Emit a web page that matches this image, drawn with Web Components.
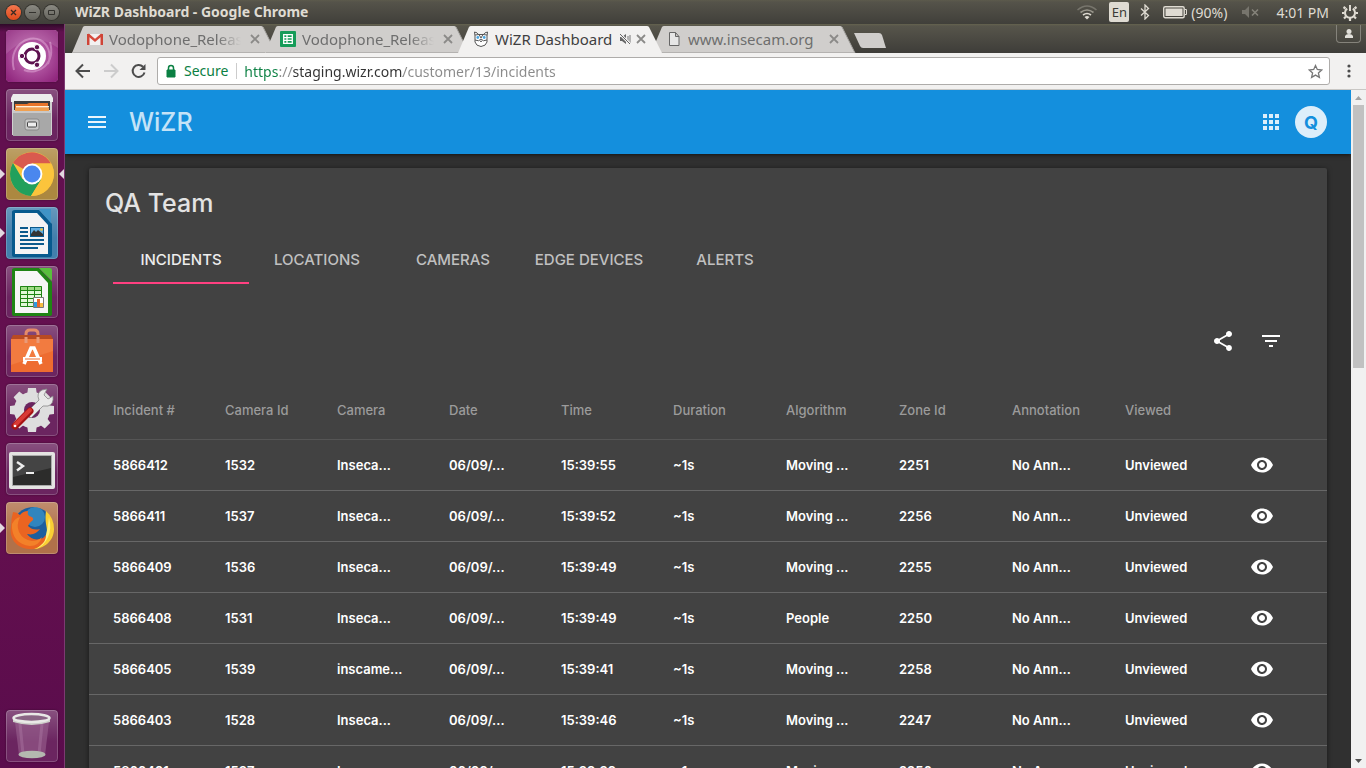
<!DOCTYPE html>
<html lang="en">
<head>
<meta charset="utf-8">
<title>WiZR Dashboard</title>
<style>
html, body { margin: 0; height: 100%; overflow: hidden; background: #303030; }
body { font-family: "Noto Sans", "Open Sans", sans-serif; }
</style>
</head>
<body>
<desktop-shell>
  <menu-bar slot="bar" heading="WiZR Dashboard - Google Chrome"></menu-bar>
  <app-launcher slot="launcher">
    <launcher-item name="Search" icon="dash" tint="#9a3a86"></launcher-item>
    <launcher-item name="Files" icon="files" tint="#6b2560"></launcher-item>
    <launcher-item name="Chrome" icon="chrome" tint="#ac8840" running active></launcher-item>
    <launcher-item name="Writer" icon="writer" tint="#427fac" running></launcher-item>
    <launcher-item name="Calc" icon="calc" tint="#6b2560"></launcher-item>
    <launcher-item name="Software" icon="software" tint="#6b2560"></launcher-item>
    <launcher-item name="Settings" icon="settings" tint="#6b2560"></launcher-item>
    <launcher-item name="Terminal" icon="terminal" tint="#6b2560"></launcher-item>
    <launcher-item name="Firefox" icon="firefox" tint="#b0714a" running></launcher-item>
    <launcher-item slot="end" name="Trash" icon="trash" tint="#6b2560"></launcher-item>
  </app-launcher>
  <browser-window>
    <browser-tab slot="tab" icon="gmail" fade>Vodophone_Release</browser-tab>
    <browser-tab slot="tab" icon="sheets" fade>Vodophone_Release</browser-tab>
    <browser-tab slot="tab" icon="owl" active muted>WiZR Dashboard</browser-tab>
    <browser-tab slot="tab" icon="page">www.insecam.org</browser-tab>
    <browser-toolbar slot="toolbar" url="https://staging.wizr.com/customer/13/incidents"></browser-toolbar>
    <wizr-app>
      <wizr-header slot="header" initial="Q">WiZR</wizr-header>
      <team-card>
        <span slot="title">QA Team</span>
        <section-tabs slot="tabs" items="Incidents,Locations,Cameras,Edge Devices,Alerts"></section-tabs>
        <incident-table></incident-table>
      </team-card>
    </wizr-app>
    <page-scrollbar slot="scroll"></page-scrollbar>
  </browser-window>
</desktop-shell>

<script>
const define = (name, render) => customElements.define(name, class extends HTMLElement {
  connectedCallback() {
    if (this.shadowRoot) return;
    this.attachShadow({ mode: "open" }).innerHTML = render(this);
  }
});
const reset = `:host,*{box-sizing:border-box} button{margin:0;padding:0;border:0;background:none;color:inherit;font:inherit;display:flex;align-items:center;justify-content:center;flex:none} svg{display:block;flex:none} a{color:inherit;text-decoration:none}`;

/* Launcher artwork, drawn on a 52 x 52 tile */
const launcherIcons = {
  dash: `<defs><radialGradient id="g" cx=".5" cy=".5" r=".7"><stop offset="0" stop-color="#c877ba"/><stop offset="1" stop-color="#8b1f78"/></radialGradient></defs>
    <rect width="52" height="52" rx="4" fill="url(#g)"/><path d="M8 40C2 16 22 4 34 10c8 4 12 14 8 24M44 12c6 22-12 34-26 28" fill="none" stroke="#e0a8d6" stroke-width="2" opacity=".55"/>
    <path d="M0 0h52v18C36 6 18 6 0 24z" fill="#fff" opacity=".12"/>
    <circle cx="26" cy="26" r="14" fill="#fff"/><circle cx="26" cy="26" r="7" fill="none" stroke="#5e1250" stroke-width="3"/>
    <g fill="#5e1250" stroke="#fff" stroke-width="1"><circle cx="16" cy="26" r="2.700"/><circle cx="31" cy="17.200" r="2.700"/><circle cx="31" cy="34.800" r="2.700"/></g>`,
  files: `<path d="M6 9l2-4h36l2 4v37H6z" fill="#d0d0d0"/><path d="M5 9l2-4h38l2 4v4H5z" fill="#ececec"/><path d="M8 12h36v9H8z" fill="#3c3c3c"/>
    <path d="M9 15h12l2-1h19v7H9z" fill="#e8742a"/><path d="M10 17h33v1.500H10z" fill="#fff2d8"/><path d="M9 19h34v3H9z" fill="#f0a050"/>
    <path d="M7 22h38v25H7z" fill="#a8a8a8"/><path d="M7 22h38v2H7z" fill="#c8c8c8"/><rect x="19" y="30" width="14" height="11" rx="2" fill="#c9c9c9" stroke="#888"/><rect x="21.500" y="33" width="9" height="5" rx="1" fill="#eee" stroke="#444"/>`,
  chrome: `<circle cx="26" cy="26" r="22" fill="#fbc43c"/><path d="M26 26L7 15A22 22 0 0 1 45 15.500H26z" fill="#d95a4e"/>
    <path d="M7 15A22 22 0 0 0 25 48l10.500-17H16.500z" fill="#21a05c"/><path d="M45 15.500H26V26l9 6L25 48A22 22 0 0 0 45 15.500z" fill="#fbc43c"/>
    <circle cx="26" cy="26" r="10.400" fill="#fff"/><circle cx="26" cy="26" r="8.500" fill="#4a87ee"/>`,
  writer: `<path d="M9 3h24l13 14v31q0 2-2 2H8q-2 0-2-2V5q0-2 3-2z" fill="#075a8d"/><path d="M33 2h12v14z" fill="#3f94c6"/><path d="M9 6h22l11 12v29H9z" fill="#f4f4f4"/>
    <g fill="#0b5a8c"><path d="M14 20h8v2h-8zM14 24h8v2h-8zM14 28h8v2h-8zM14 32h24v2H14zM14 36h24v2H14zM14 40h18v2H14z"/><path d="M24 20h14v10H24z"/></g><path d="M25 21h12v8H25z" fill="#62aee0"/><path d="M25 29v-2l3-4 2 2 2-2 5 4v2z" fill="#333"/><circle cx="35.500" cy="22.500" r="1.300" fill="#f6c434"/>`,
  calc: `<path d="M9 2h24l13 14v32q0 2-2 2H8q-2 0-2-2V4q0-2 3-2z" fill="#1f8414"/><path d="M33 2h11q2 0 2 2v11z" fill="#58bf3c"/><path d="M9 5h22l11 12v30H9z" fill="#f6f6f6"/>
    <path d="M14 20h22v21H14z" fill="#e2f8d8"/><path d="M14 20h22v4H14z" fill="#9fdb84"/><path d="M14.500 20.500h21v20h-21zM21.500 20v20M28.500 20v20M14 24.500h22M14 28.500h22M14 32.500h22M14 36.500h22" fill="none" stroke="#1f8414"/>
    <path d="M27.500 31.500h10v10h-10z" fill="#fff" stroke="#777"/><path d="M28 36h3v5h-3z" fill="#2e9be0"/><path d="M31 33h3v8h-3z" fill="#e8672a"/><path d="M34 37h3v4h-3z" fill="#f5bd42"/>`,
  software: `<path d="M20 18V9q0-4 4-4h4q4 0 4 4v9" fill="none" stroke="#e58a68" stroke-width="3"/><path d="M7 10h38l2 4H5z" fill="#b84a22"/><path d="M5 14h42v33H5z" fill="#ee6c30"/><path d="M5 14h42v12L5 40z" fill="#f58a50" opacity=".5"/>
    <path d="M20 18V12M32 18V12" stroke="#e99a78" stroke-width="3"/><path d="M18 39l7-16h3l7 16" fill="none" stroke="#fff" stroke-width="3.500"/><path d="M17 34h19" stroke="#fff" stroke-width="4"/><path d="M19 34h15" stroke="#ee6c30" stroke-width="1"/>`,
  settings: `<g fill="#dedede"><circle cx="26" cy="26" r="18"/><path d="M22 4h8l1 8h-10zM22 48h8l1-8h-10zM4 22v8l8 1v-10zM48 22v8l-8 1v-10z"/><path transform="rotate(45 26 26)" d="M22 4h8l1 8h-10zM22 48h8l1-8h-10zM4 22v8l8 1v-10zM48 22v8l-8 1v-10z"/></g><circle cx="26" cy="26" r="8" fill="#6b2560"/>
    <path d="M20 29L33 16q-3-7 3-10l5-1-3 6 4 4 5-3q1 8-5 10l-5 0-12 12z" fill="#e8e8e8" stroke="#888" stroke-width=".8"/><path d="M9 42L24 27" stroke="#a61313" stroke-width="7" stroke-linecap="round"/><path d="M9 41L24 26" stroke="#d83a35" stroke-width="4" stroke-linecap="round"/><circle cx="9" cy="42" r="1.300" fill="#fff"/>`,
  terminal: `<rect x="3" y="9" width="46" height="37" rx="2" fill="#e4e4e2"/><rect x="6" y="12" width="40" height="31" fill="#aaa"/><path d="M7 13h38v29H7z" fill="#2c2c2b"/><path d="M7 13h38v12L7 34z" fill="#555" opacity=".6"/><path d="M11 19l6 4-6 4.500" fill="none" stroke="#eee" stroke-width="2.400"/><path d="M20 30h8" stroke="#eee" stroke-width="2"/>`,
  firefox: `<circle cx="27" cy="25" r="20" fill="#1c5f9e"/><circle cx="29" cy="15" r="10" fill="#3f9fd4" opacity=".6"/><path d="M40 9q8 7 8 18c0 12-10 20-21 20q10-4 13-13c3-8-2-11 0-25z" fill="#f9cf34"/><path d="M43 15q3 12-1 20-4 9-12 12 8-6 10-14 2-8 3-18z" fill="#fff07a"/>
    <path d="M7 10q4 0 7 3 3-4 8-4-1 3 1 5 5 1 4 4-4 3-5 6 5 5 12 3-5 7-13 5 5 7 13 5 4-1 6-4 0 6-5 10-5 5-12 4C9 46 3 35 5 25q0-8 2-15z" fill="#ea6421"/><path d="M6 22q3-6 8-7-4 8-1 15 4 8 13 9 6 0 10-4-3 9-12 9C12 43 5 34 6 22z" fill="#f58b2c" opacity=".75"/>`,
  trash: `<path d="M9 12h34l-4 33q-12 5-26 0z" fill="#9a6290" opacity=".6"/><path d="M14 14l3 30M36 14l-3 30" stroke="#c79cc0" opacity=".25" stroke-width="3"/><ellipse cx="26" cy="44.500" rx="13.500" ry="3.800" fill="#b4b8b0"/><path d="M7 8v4q19 6 37 0V8z" fill="#cdcdc9"/><ellipse cx="25.500" cy="8" rx="18" ry="4" fill="#8a6584" stroke="#e9e9e6" stroke-width="2.500"/>`
};

/* Favicons, drawn on a 16 x 16 grid */
const favicons = {
  gmail: `<path d="M0 3h16v11H0z" fill="#f3f1f0"/><path d="M1 3.500l7 6 7-6" fill="none" stroke="#d54a3c" stroke-width="2.400"/><path d="M0 3h2.500v11H0zM13.500 3H16v11h-2.500z" fill="#cf4436"/>`,
  sheets: `<rect width="16" height="16" rx="1" fill="#169c59"/><path d="M3.700 3.700h8.600v8.600H3.700zM3.700 6.600h8.600M3.700 9.400h8.600M7 3.700v8.600" fill="none" stroke="#fff" stroke-width="1.300"/>`,
  owl: `<path d="M1.500 1q3 .5 4 2.500h5q1-2 4-2.500l-.5 4v6q-1 4-6 4.500-5-.5-6-4.500V5z" fill="#fff" stroke="#555" stroke-width="1"/><path d="M2 4l4-.5L8 7l2-3.500 4 .5M2 9q4 2 6-1 2 3 6 1M7 9.500l1 1.500 1-1.500" fill="none" stroke="#555"/><circle cx="4.800" cy="6.500" r="1.400" fill="#4aa5e0"/><circle cx="11.200" cy="6.500" r="1.400" fill="#4aa5e0"/>`,
  page: `<path d="M3.500 1.500h6l3.500 4v9h-9.500zM9.500 1.500v4H13" fill="#e6e6e6" stroke="#666"/>`
};

define("desktop-shell", () => `<style>${reset}
  :host{display:grid;grid-template:24px minmax(0,1fr) / 65px minmax(0,1fr);height:100vh;overflow:hidden}
  .bar{grid-column:1 / -1;display:grid}.launcher,.main{display:grid;min-height:0;min-width:0}
  </style><div class="bar"><slot name="bar"></slot></div><div class="launcher"><slot name="launcher"></slot></div><div class="main"><slot></slot></div>`);

define("menu-bar", el => `<style>${reset}
  :host{display:flex;align-items:center;justify-content:space-between;height:24px;padding:0 8px 0 6px;background:linear-gradient(#5c5a4c,#55534a 2px,#403f3a);color:#dfdbd2;font-size:14px}
  .left,.right,.buttons{display:flex;align-items:center}.buttons{gap:4px;margin-right:16px}
  .buttons button{width:15px;height:15px;border-radius:50%;background:linear-gradient(#8a8982,#64635c);box-shadow:0 0 0 1px #35342f}
  .buttons .close{background:linear-gradient(#f4774e,#df4a1b)}
  h1{margin:0;font-size:14px;line-height:24px;font-weight:700;white-space:nowrap}
  .lang{background:#dfdbd2;color:#3c3b37;width:20px;height:20px;border-radius:2px;line-height:20px;text-align:center;margin:0 11px 0 12px;font-size:13px}
  .battery{margin-left:13px}.level{margin:0 14px 0 4px}.clock{margin:0 13px 0 16px}
  </style><div class="left"><div class="buttons">
  <button class="close" aria-label="Close"><svg width="9" height="9"><path d="M2 2l5 5M7 2L2 7" stroke="#3b2a22" stroke-width="1.300"/></svg></button>
  <button aria-label="Minimise"><svg width="9" height="9"><path d="M1 4.500h7" stroke="#33322e"/></svg></button>
  <button aria-label="Maximise"><svg width="9" height="9"><path d="M1.500 2.500h6v4h-6z" fill="none" stroke="#33322e"/></svg></button></div>
  <h1>${el.getAttribute("heading")}</h1></div>
  <div class="right">
  <svg width="20" height="16" fill="none" stroke-width="1.600"><path d="M.5 6q9.500-8 19 0" stroke="#77756c"/><path d="M3.500 8.500q6.500-5 13 0" stroke="#99968c"/><path d="M6 11q4-3 8 0" stroke="#dfdbd2"/><path d="M7.500 13q2.500-2 5 0L10 15.500z" fill="#dfdbd2"/></svg>
  <span class="lang">En</span>
  <svg width="10" height="16" fill="none" stroke="#dfdbd2" stroke-width="1.300"><path d="M1 4.500l7.500 7L5 15V1l3.500 3.500-7.500 7"/></svg>
  <svg class="battery" width="24" height="14"><rect x=".7" y="1.700" width="20.500" height="11" rx="1.500" fill="none" stroke="#dfdbd2" stroke-width="1.400"/><path d="M2.500 3.500h17v7.500h-17z" fill="#dfdbd2"/><path d="M22 4.500h1.500v5H22" fill="none" stroke="#dfdbd2"/></svg>
  <span class="level">(90%)</span>
  <svg width="19" height="14"><path d="M1 5h3l4-4v12L4 9H1z" fill="#77756d"/><path d="M11 4.500l6 6M17 4.500l-6 6" stroke="#85837a" stroke-width="1.600"/></svg>
  <span class="clock">4:01 PM</span>
  <svg width="16" height="17" fill="none" stroke="#dfdbd2"><path d="M5.200 4.600a5 5 0 1 0 5.600 0" stroke-width="2"/><path d="M8 1v6" stroke-width="2"/><path d="M3.500 4.500l-2-1.500M12.500 4.500l2-1.500M2.500 9H0M13.500 9H16M4 12.500l-2 2M12 12.500l2 2M8 14v3" stroke-width="2.200"/></svg></div>`);

define("app-launcher", () => `<style>${reset}
  :host{display:flex;flex-direction:column;justify-content:space-between;min-height:0;padding:6px 0;background:linear-gradient(#2e0a28,#61104f 8px,#65104f 60%,#5a0c4c);border-right:1px solid #7d3a72}
  nav{display:flex;flex-direction:column;gap:7px}</style>
  <nav><slot></slot></nav><nav><slot name="end"></slot></nav>`);

define("launcher-item", el => `<style>${reset}
  :host{display:flex;align-items:center;justify-content:space-between;height:52px}
  i{width:0;height:0;border:5px solid transparent;margin:0}.l{border-width:5px 0 5px 5px;margin-right:1px}.r{border-width:5px 5px 5px 0;margin-left:1px}
  .l.on{border-left-color:#e2d8e0}.r.on{border-right-color:#e2d8e0}
  button{width:52px;height:52px;border-radius:4px;overflow:hidden;background:linear-gradient(#fff3,#fff0 60%) ${el.getAttribute("tint")};box-shadow:inset 0 0 0 1px #ffffff33,0 0 2px #0006}
  </style><i class="l ${el.hasAttribute("running") ? "on" : ""}"></i><button aria-label="${el.getAttribute("name")}"><svg width="52" height="52">${launcherIcons[el.getAttribute("icon")]}</svg></button><i class="r ${el.hasAttribute("active") ? "on" : ""}"></i>`);

define("browser-window", () => `<style>${reset}
  :host{display:grid;grid-template-rows:29px 37px minmax(0,1fr);min-width:0;min-height:0}
  .strip{display:flex;align-items:flex-end;padding:0 5px 0 7px;background:linear-gradient(#65634f,#57554b 2px,#3e3d39)}
  .new{align-self:center;margin:3px 0 0 9px}
  .user{margin-left:auto;align-self:flex-start;width:25px;height:18px;border:1px solid #85837b;border-top:0;border-radius:0 0 4px 4px;margin-top:1px}
  .view{display:grid;grid-template-columns:minmax(0,1fr) 15px;min-height:0;overflow:hidden}
  </style><div class="strip"><slot name="tab"></slot>
  <button class="new" aria-label="New tab"><svg width="34" height="15"><path d="M1 0h25q2 0 3 2l4 13H10q-2 0-3-2z" fill="#cfcdcb"/></svg></button>
  <button class="user" aria-label="Profile"><svg width="10" height="11"><circle cx="5" cy="3.500" r="2.500" fill="#e2e0da"/><path d="M1 10V8q1-2 4-2t4 2v2z" fill="#e2e0da"/></svg></button></div>
  <slot name="toolbar"></slot><div class="view"><slot></slot><slot name="scroll"></slot></div>`);

define("browser-tab", el => {
  const on = el.hasAttribute("active");
  return `<style>${reset}
  :host{display:flex;align-items:center;position:relative;z-index:${on ? 2 : 1};flex:none;width:205px;height:28px;margin-right:-12px;padding:0 14px 0 15px;color:${on ? "#3f3f3f" : "#6e6e6e"};font-size:15px}
  .shape{position:absolute;inset:0;z-index:-1}.fav{margin-right:6px}
  .label{flex:1;min-width:0;overflow:hidden;white-space:nowrap;line-height:26px}
  :host([fade]) .label{-webkit-mask-image:linear-gradient(90deg,#000 calc(100% - 24px),transparent)}
  button{width:16px;height:16px;margin-left:6px}.mute{margin-left:0;width:12px}.mute + button{margin-left:2px}
  </style><svg class="shape" width="205" height="28"><path d="M0 28L11 2q.7-1 2-1h176q1.300 0 2 1l13 26z" fill="${on ? "#f2f1f0" : "#d0cecc"}"/>${on ? "" : `<path d="M1 27.500h203" stroke="#b4b2b0"/><path d="M191 2l13 26" stroke="#a3a19e" fill="none"/>`}</svg>
  <svg class="fav" width="16" height="16">${favicons[el.getAttribute("icon")]}</svg><span class="label"><slot></slot></span>
  ${el.hasAttribute("muted") ? `<button class="mute" aria-label="Unmute tab"><svg width="12" height="12"><path d="M1 4h2l4-3v10L3 8H1z" fill="#666"/><path d="M9 3v6M11 2v8" stroke="#777"/><path d="M1 1l10 10" stroke="#f2f1f0" stroke-width="2.500"/><path d="M1 1l10 10" stroke="#666"/></svg></button>` : ""}
  <button aria-label="Close tab"><svg width="10" height="10"><path d="M1 1l8 8M9 1L1 9" stroke="#8b8a88" stroke-width="1.800"/></svg></button>`;
});

define("browser-toolbar", el => `<style>${reset}
  :host{display:flex;align-items:center;padding:0 11px 0 10px;height:37px;background:#f2f1f0;border-bottom:1px solid #c9c7c4;color:#4c4c4c}
  .nav{width:16px;height:28px;margin-right:12px}.reload{margin-right:10px}
  .box{flex:1;display:flex;align-items:center;height:28px;padding:0 6px 0 8px;background:#fff;border:1px solid #aeacaa;border-radius:3px;font-size:14px}
  .secure{margin:0 8px 0 8px;color:#0b8043;line-height:20px}
  .rule{width:1px;height:16px;background:#ccc;margin-right:7px}
  input{flex:1;min-width:0;height:24px;border:0;padding:0;outline:0;font:inherit;
    background:linear-gradient(90deg,#0b8043 34px,#8a8a8a 34px 48px,#333 48px 159px,#8a8a8a 159px);-webkit-background-clip:text;background-clip:text;-webkit-text-fill-color:transparent}
  .menu{width:12px;margin-left:13px}
  label{display:flex;flex:1;align-items:center}
  </style>
  <button class="nav" aria-label="Back"><svg width="16" height="16" fill="none" stroke="#4c4c4c" stroke-width="2"><path d="M15 8H2M8 1.500L1.500 8 8 14.500"/></svg></button>
  <button class="nav" aria-label="Forward"><svg width="16" height="16" fill="none" stroke="#ccc" stroke-width="2"><path d="M1 8h13M8 1.500L14.500 8 8 14.500"/></svg></button>
  <button class="nav reload" aria-label="Reload"><svg width="16" height="16"><path d="M13.500 9.500A6 6 0 1 1 12 3.700" fill="none" stroke="#4c4c4c" stroke-width="2"/><path d="M14.500 1v6h-6z" fill="#4c4c4c"/></svg></button>
  <div class="box"><label><svg width="10" height="14"><path d="M1 6h8v7H1z" fill="#0b8043" stroke="#0b8043"/><path d="M2.500 6V4a2.500 2.500 0 0 1 5 0v2" fill="none" stroke="#0b8043" stroke-width="1.500"/></svg>
  <span class="secure">Secure</span><span class="rule"></span><input value="${el.getAttribute("url")}" aria-label="Address"></label>
  <button aria-label="Bookmark"><svg width="15" height="15"><path d="M7.500 1.500l1.800 4 4.400.5-3.300 3 1 4.400-3.900-2.300-3.900 2.300 1-4.400-3.300-3 4.400-.5z" fill="none" stroke="#777" stroke-width="1.300"/></svg></button></div>
  <button class="menu" aria-label="Menu"><svg width="4" height="14" fill="#4c4c4c"><circle cx="2" cy="2" r="1.600"/><circle cx="2" cy="7" r="1.600"/><circle cx="2" cy="12" r="1.600"/></svg></button>`);

define("page-scrollbar", () => `<style>${reset}
  :host{display:grid;grid-template-rows:15px minmax(0,1fr) 15px;background:#f1f1f1}
  .thumb{width:11px;height:40.6%;margin:0 auto;background:#c1c1c1}
  </style><button aria-label="Scroll up"><svg width="7" height="4"><path d="M0 4l3.500-4L7 4z" fill="#a3a3a3"/></svg></button><div><div class="thumb"></div></div><button aria-label="Scroll down"><svg width="7" height="4"><path d="M0 0l3.500 4L7 0z" fill="#505050"/></svg></button>`);

define("wizr-app", () => `<style>${reset}
  :host{display:flex;flex-direction:column;min-height:0;overflow:hidden;background:#303030;color:#fff;font-family:Inter,"Liberation Sans",sans-serif}
  main{padding:14px 24px 0}</style><slot name="header"></slot><main><slot></slot></main>`);

define("wizr-header", el => `<style>${reset}
  :host{display:flex;align-items:center;flex:none;height:64px;padding:0 24px 0 20px;background:#148fdd;color:#d6ebf9;box-shadow:0 1px 4px #0009}
  button{width:24px;height:24px}h2{margin:0 auto 0 20px;font-size:25px;line-height:32px;font-weight:500;color:#c4e3f7}
  .avatar{width:32px;height:32px;margin-left:12px;border-radius:50%;background:#dceefa;color:#148fdd;font-size:18px;font-weight:700}
  </style><button aria-label="Menu"><svg width="24" height="24"><path d="M3 18h18v-2H3zm0-5h18v-2H3zm0-7v2h18V6z" fill="#eaf5fc"/></svg></button>
  <h2><slot></slot></h2>
  <button aria-label="Apps"><svg width="24" height="24"><path d="M4 8h4V4H4zm6 12h4v-4h-4zm-6 0h4v-4H4zm0-6h4v-4H4zm6 0h4v-4h-4zm6-10v4h4V4zm-6 4h4V4h-4zm6 6h4v-4h-4zm0 6h4v-4h-4z" fill="#dceefa"/></svg></button>
  <button class="avatar">${el.getAttribute("initial")}</button>`);

define("team-card", () => `<style>${reset}
  :host{display:block;background:#424242;border-radius:2px;box-shadow:0 1px 5px #0008}
  h3{margin:0;padding:2px 16px 0;font-size:25px;line-height:66px;font-weight:500;color:#e3e3e3}
  .actions{display:flex;justify-content:flex-end;height:50px;margin:32px 0 14px;padding-right:32px}
  .actions button{width:48px;height:50px}
  </style><h3><slot name="title"></slot></h3><slot name="tabs"></slot>
  <div class="actions"><button aria-label="Share"><svg width="24" height="24" fill="#fff"><path d="M18 16.080c-.76 0-1.440.3-1.960.77L8.910 12.700c.05-.23.09-.46.09-.7s-.04-.47-.09-.7l7.050-4.110c.54.5 1.250.81 2.040.81 1.660 0 3-1.340 3-3s-1.340-3-3-3-3 1.340-3 3c0 .24.04.47.09.7L8.040 9.810C7.500 9.310 6.790 9 6 9c-1.660 0-3 1.340-3 3s1.340 3 3 3c.79 0 1.500-.31 2.040-.81l7.120 4.160c-.05.21-.08.43-.08.65 0 1.610 1.310 2.920 2.920 2.920s2.920-1.310 2.920-2.920-1.310-2.920-2.920-2.920z"/></svg></button>
  <button aria-label="Filter"><svg width="24" height="24" fill="#fff"><path d="M10 18h4v-2h-4zM3 6v2h18V6zm3 7h12v-2H6z"/></svg></button></div><slot></slot>`);

define("section-tabs", el => `<style>${reset}
  :host{display:block;padding:0 24px}nav{display:flex}
  a{width:136px;height:48px;line-height:48px;text-align:center;font-size:15px;font-weight:500;text-transform:uppercase;color:#c0c0c0;white-space:nowrap}
  a[aria-current]{color:#ededed;box-shadow:inset 0 -2px #ff4081}
  </style><nav>${el.getAttribute("items").split(",").map((t, i) => `<a href="#${t.toLowerCase().replace(" ", "-")}"${i ? "" : ' aria-current="page"'}>${t}</a>`).join("")}</nav>`);

const columns = ["Incident #", "Camera Id", "Camera", "Date", "Time", "Duration", "Algorithm", "Zone Id", "Annotation", "Viewed", ""];
const incidents = [
  ["5866412", "1532", "Inseca...", "15:39:55", "Moving ...", "2251"],
  ["5866411", "1537", "Inseca...", "15:39:52", "Moving ...", "2256"],
  ["5866409", "1536", "Inseca...", "15:39:49", "Moving ...", "2255"],
  ["5866408", "1531", "Inseca...", "15:39:49", "People", "2250"],
  ["5866405", "1539", "inscame...", "15:39:41", "Moving ...", "2258"],
  ["5866403", "1528", "Inseca...", "15:39:46", "Moving ...", "2247"],
  ["5866401", "1537", "Inseca...", "15:39:39", "Moving ...", "2256"]
];
define("incident-table", () => `<style>${reset}
  :host{display:block}
  table{width:100%;table-layout:fixed;border-collapse:separate;border-spacing:0}
  .lead{width:112px}
  th,td{padding:0 0 0 24px;text-align:left;white-space:nowrap;border-bottom:1px solid #676767}
  th{height:60px;font-size:13px;font-weight:500;color:#9b9b9b;border-color:#555}
  td{height:51px;font-size:13px;font-weight:600;color:#fff}
  button{width:48px;height:48px}
  </style><table><colgroup><col class="lead" span="5"><col span="6"></colgroup><thead><tr>${columns.map(c => `<th scope="col">${c}</th>`).join("")}</tr></thead><tbody>${incidents.map(([id, cam, name, time, algo, zone]) =>
    `<tr>${[id, cam, name, "06/09/...", time, "~1s", algo, zone, "No Ann...", "Unviewed"].map(v => `<td>${v}</td>`).join("")}<td><button aria-label="View incident ${id}"><svg width="24" height="24" fill="#fff"><path d="M12 4.500C7 4.500 2.730 7.610 1 12c1.730 4.390 6 7.500 11 7.500s9.270-3.110 11-7.500c-1.730-4.390-6-7.500-11-7.500zM12 17c-2.760 0-5-2.240-5-5s2.240-5 5-5 5 2.240 5 5-2.240 5-5 5zm0-8c-1.660 0-3 1.340-3 3s1.340 3 3 3 3-1.340 3-3-1.340-3-3-3z"/></svg></button></td></tr>`).join("")}</tbody></table>`);
</script>
</body>
</html>
